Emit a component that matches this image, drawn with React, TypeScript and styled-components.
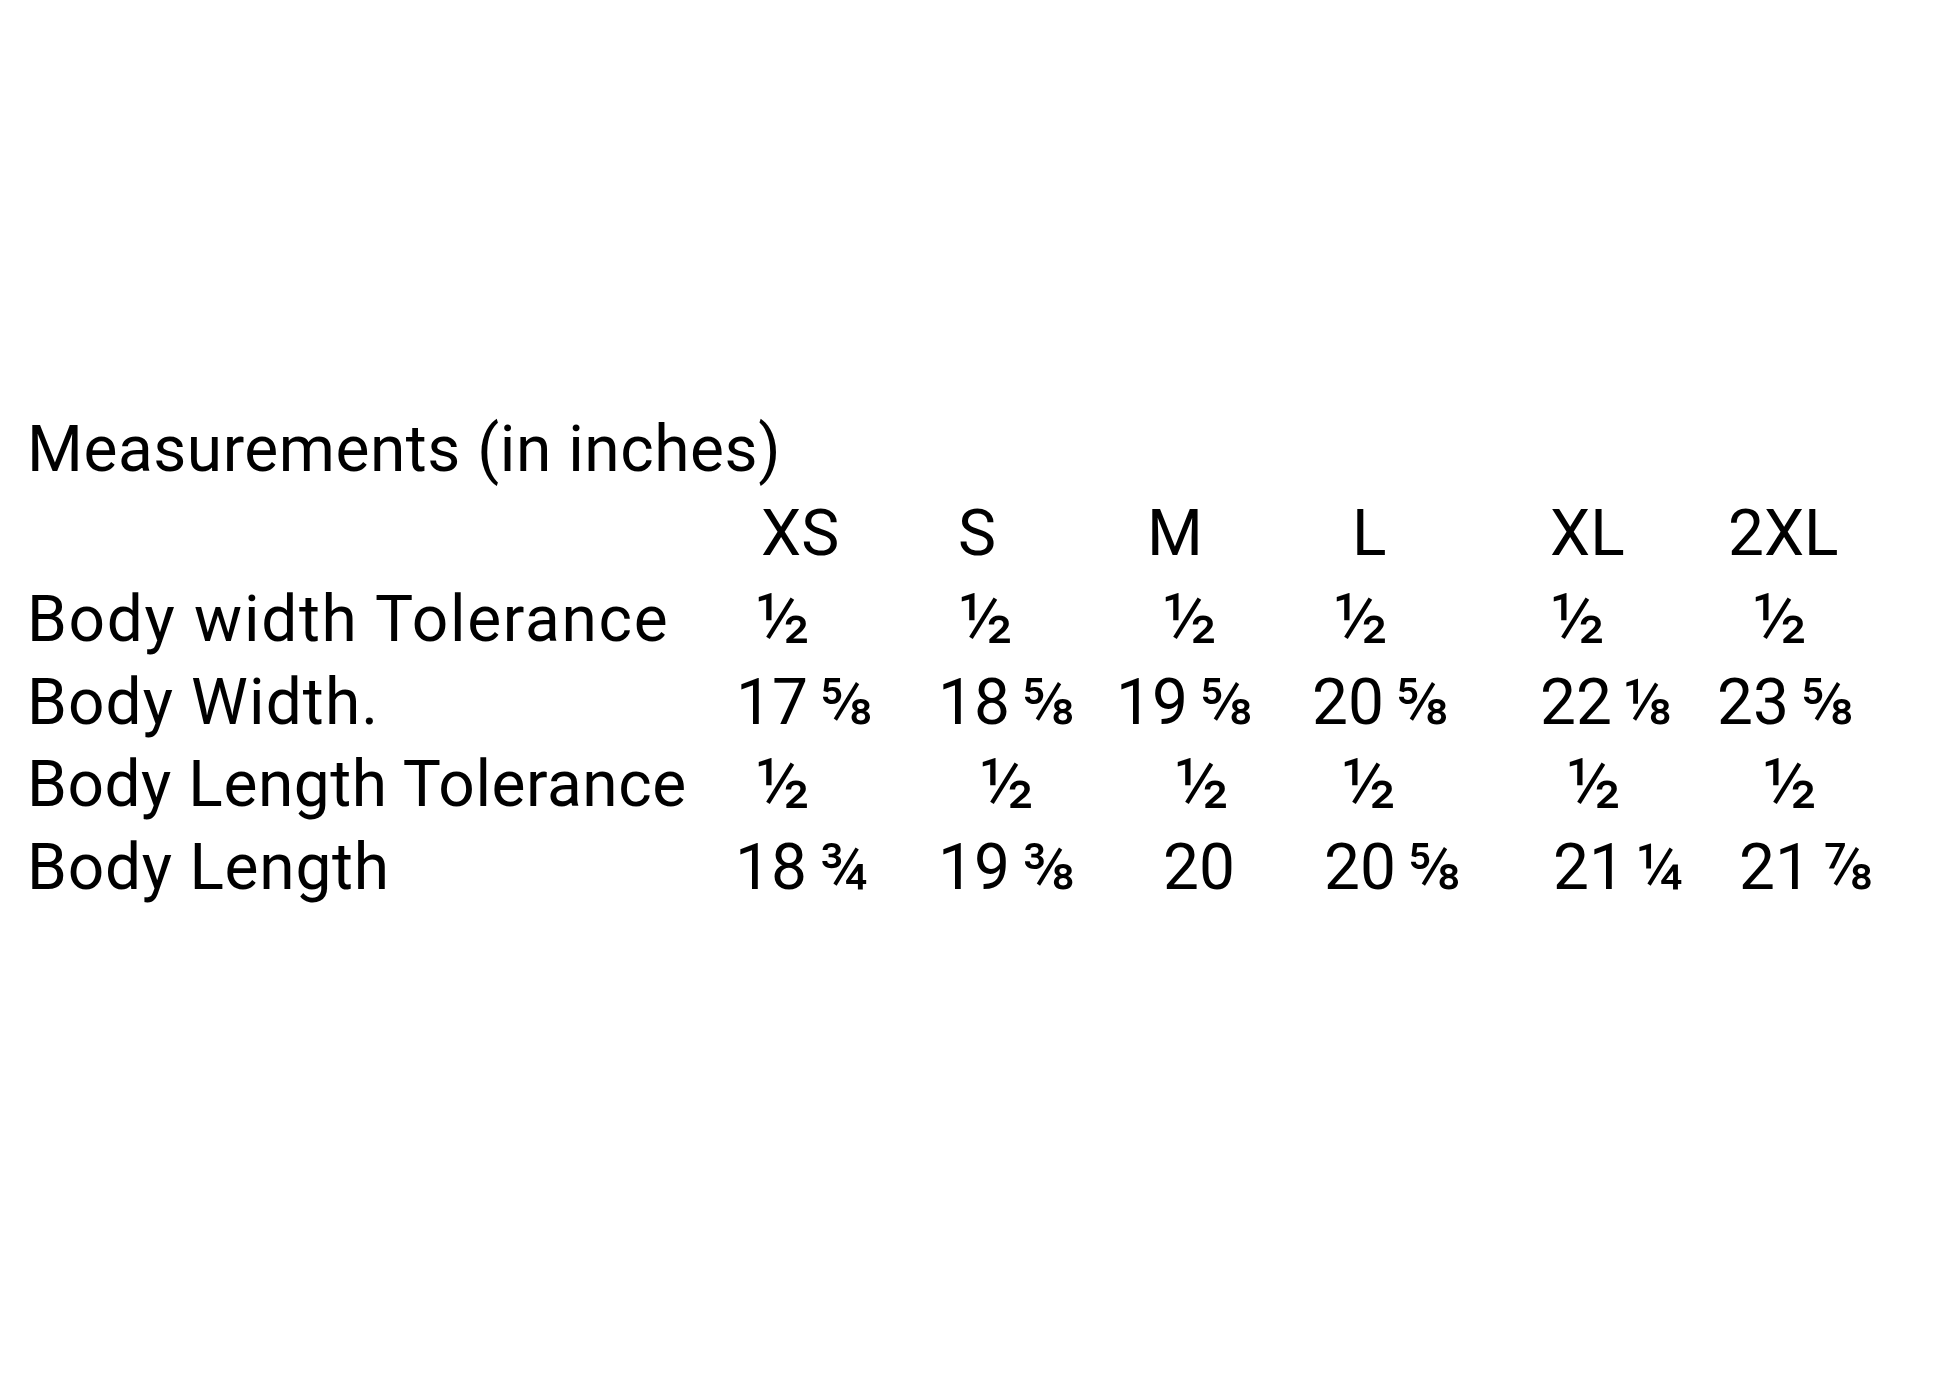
import React from "react";
import styled, { createGlobalStyle } from "styled-components";

const GlobalStyle = createGlobalStyle`
  html, body {
    margin: 0;
    padding: 0;
    background: #ffffff;
  }
  body {
    width: 1946px;
    height: 1390px;
    overflow: hidden;
  }
`;

const Page = styled.main`
  box-sizing: border-box;
  width: 1946px;
  height: 1390px;
  padding: 408px 0 0 27px;
  font-family: Roboto, "Liberation Sans", sans-serif;
  font-size: 64px;
  color: #000000;
  background: #ffffff;
`;

const Title = styled.h1`
  margin: 0 0 1px 0;
  font: inherit;
  line-height: 83px;
  letter-spacing: 0.55px;
  white-space: nowrap;
`;

const Table = styled.div`
  display: grid;
  grid-template-columns: 708px 203px 178px 196px 228px 177px 200px;
  line-height: 83px;
`;

const HeaderRow = styled.div`
  display: contents;
  & > * {
    margin-bottom: 3px;
  }
`;

const Row = styled.div`
  display: contents;
  & > * {
    margin-bottom: -0.5px;
  }
`;

const Label = styled.div<{ $track?: number }>`
  white-space: nowrap;
  letter-spacing: ${(p) => p.$track ?? 0}px;
`;

const Cell = styled.div<{ $dx: number }>`
  white-space: nowrap;
  padding-left: ${(p) => p.$dx}px;
`;

const Frac = styled.span<{ $mixed: boolean }>`
  font-size: ${(p) => (p.$mixed ? "1em" : "1.1em")};
  margin-left: ${(p) => (p.$mixed ? "-4px" : "0")};
  line-height: 0;
  vertical-align: ${(p) => (p.$mixed ? "0" : "-0.03em")};
`;

type Value = { whole?: string; frac?: string };

function Measure({ v }: { v: Value }) {
  const mixed = Boolean(v.whole);
  return (
    <>
      {v.whole}
      {v.whole && v.frac ? " " : null}
      {v.frac ? <Frac $mixed={mixed}>{v.frac}</Frac> : null}
    </>
  );
}

const half: Value = { frac: "½" };

const sizes = ["XS", "S", "M", "L", "XL", "2XL"];
const headerDx = [26, 20, 31, 40, 10, 11];

const rows: { label: string; track: number; values: Value[]; dx: number[] }[] = [
  {
    label: "Body width Tolerance",
    track: 1.7,
    values: [half, half, half, half, half, half],
    dx: [21, 21, 47, 22, 11, 36],
  },
  {
    label: "Body Width.",
    track: 1.1,
    values: [
      { whole: "17", frac: "⅝" },
      { whole: "18", frac: "⅝" },
      { whole: "19", frac: "⅝" },
      { whole: "20", frac: "⅝" },
      { whole: "22", frac: "⅛" },
      { whole: "23", frac: "⅝" },
    ],
    dx: [1, 0, 0, 0, 0, 0],
  },
  {
    label: "Body Length Tolerance",
    track: 0.55,
    values: [half, half, half, half, half, half],
    dx: [21, 42, 59, 30, 27, 46],
  },
  {
    label: "Body Length",
    track: 0.75,
    values: [
      { whole: "18", frac: "¾" },
      { whole: "19", frac: "⅜" },
      { whole: "20" },
      { whole: "20", frac: "⅝" },
      { whole: "21", frac: "¼" },
      { whole: "21", frac: "⅞" },
    ],
    dx: [0, 0, 47, 12, 13, 22],
  },
];

export default function App() {
  return (
    <>
      <GlobalStyle />
      <Page>
        <Title>Measurements (in inches)</Title>
        <Table>
          <HeaderRow>
            <Label />
            {sizes.map((s, i) => (
              <Cell key={s} $dx={headerDx[i]}>
                {s}
              </Cell>
            ))}
          </HeaderRow>
          {rows.map((r) => (
            <Row key={r.label}>
              <Label $track={r.track}>{r.label}</Label>
              {r.values.map((v, i) => (
                <Cell key={i} $dx={r.dx[i]}>
                  <Measure v={v} />
                </Cell>
              ))}
            </Row>
          ))}
        </Table>
      </Page>
    </>
  );
}
